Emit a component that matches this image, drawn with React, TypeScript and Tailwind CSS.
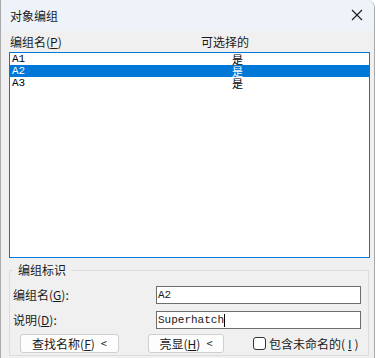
const rows = [
  { name: "A1", sel: "是", active: false },
  { name: "A2", sel: "是", active: true },
  { name: "A3", sel: "是", active: false },
];

const cjk = "font-['Noto_Sans_CJK_SC',sans-serif]";
const mono = "font-['Liberation_Mono','Noto_Sans_CJK_SC',monospace]";

function Btn({ label, k, w }: { label: string; k: string; w: string }) {
  return (
    <button
      className={`${w} h-[19px] rounded-[3px] border border-[#cfcfcf] bg-[#fdfdfd] text-[12px] leading-[17px] text-[#1a1a1a] flex items-center justify-center gap-[6px] ${cjk}`}
    >
      <span>
        {label}(<span className="underline">{k}</span>)
      </span>
      <span className="text-[11px]">&lt;</span>
    </button>
  );
}

export default function App() {
  return (
    <div className="w-[376px] h-[358px] bg-white overflow-hidden">
      <div className="w-[375px] h-[358px] border-l border-r border-[#a9a9a9] rounded-tr-[8px] overflow-hidden flex flex-col bg-[#f0f0f0] text-[#1a1a1a]">
        {/* title bar */}
        <div className="h-[31px] shrink-0 bg-[#eef3fa] flex items-center justify-between pl-[9px] pr-[11px]">
          <span className={`text-[12px] ${cjk}`}>对象编组</span>
          <svg width="12" height="12" viewBox="0 0 12 12" className="mb-[1px]">
            <path d="M1 1 L11 11 M11 1 L1 11" stroke="#1a1a1a" strokeWidth="1.1" />
          </svg>
        </div>

        <div className="flex flex-col px-[8px]">
          {/* column headers */}
          <div className={`h-[21px] flex items-center text-[12px] ${cjk}`}>
            <span className="w-[192px] pl-[1px]">
              编组名(<span className="underline">P</span>)
            </span>
            <span>可选择的</span>
          </div>

          {/* list */}
          <div className="w-[361px] h-[206px] border border-[#0078d7] bg-white">
            {rows.map((r) => (
              <div
                key={r.name}
                className={`h-[12px] flex items-center ${r.active ? "bg-[#0078d7] text-white" : "text-black"}`}
              >
                <span className={`w-[222px] pl-[2px] text-[11px] leading-[12px] ${mono}`}>{r.name}</span>
                <span className={`text-[11px] leading-[12px] ${cjk}`}>{r.sel}</span>
              </div>
            ))}
          </div>

          {/* group box */}
          <fieldset className="mt-[4px] w-[360px] h-[94px] border border-[#dcdcdc] p-0 m-0">
            <legend className={`ml-[3px] px-[5px] text-[12px] leading-[16px] ${cjk}`}>编组标识</legend>
            <div className="flex flex-col gap-[7px] pt-[8px] pl-[3px]">
              <div className="flex items-center">
                <span className={`w-[143px] text-[12px] ${cjk}`}>
                  编组名(<span className="underline">G</span>):
                </span>
                <div className={`w-[205px] h-[18px] border border-[#6d6d6d] bg-white text-[11px] leading-[16px] pl-[1px] ${mono}`}>
                  A2
                </div>
              </div>
              <div className="flex items-center">
                <span className={`w-[143px] text-[12px] ${cjk}`}>
                  说明(<span className="underline">D</span>):
                </span>
                <div className={`w-[205px] h-[18px] border border-[#6d6d6d] bg-white text-[11px] leading-[16px] pl-[1px] flex items-center ${mono}`}>
                  Superhatch
                  <span className="w-px h-[13px] bg-black" />
                </div>
              </div>
              <div className="flex items-center -mt-[2px] pl-[7px]">
                <Btn label="查找名称" k="F" w="w-[99px]" />
                <div className="w-[29px]" />
                <Btn label="亮显" k="H" w="w-[76px]" />
                <div className="w-[29px]" />
                <label className={`flex items-center gap-[3px] text-[12px] ${cjk}`}>
                  <span className="w-[13px] h-[13px] rounded-[3px] border border-[#333] bg-white" />
                  包含未命名的(<span className="underline">I</span>)
                </label>
              </div>
            </div>
          </fieldset>
        </div>
      </div>
    </div>
  );
}
